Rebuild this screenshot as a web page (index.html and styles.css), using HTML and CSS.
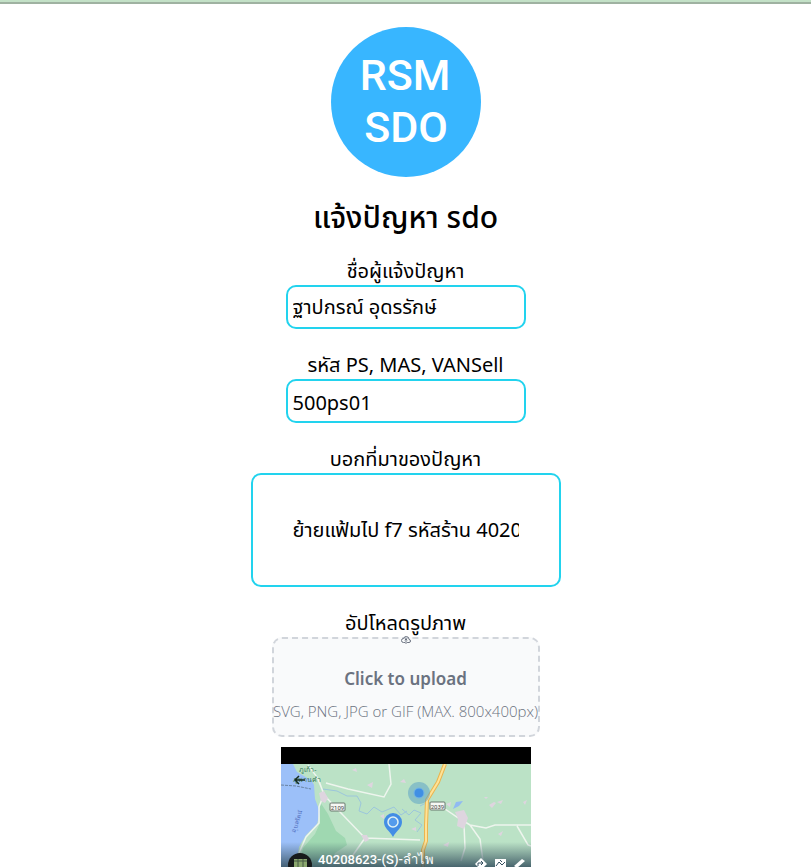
FILE: index.html
```html
<!DOCTYPE html>
<html lang="th">
<head>
<meta charset="utf-8">
<meta name="viewport" content="width=device-width, initial-scale=1">
<title>แจ้งปัญหา sdo</title>
<link rel="stylesheet" href="styles.css">
</head>
<body>
<div class="topbar"></div>
<main class="page">
  <svg class="logo" viewBox="0 0 150 150" role="img" aria-label="RSM SDO">
    <circle cx="75" cy="75" r="75" fill="#38b6ff"/>
    <text x="74" y="63" class="logo-text">RSM</text>
    <text x="75" y="115" class="logo-text">SDO</text>
  </svg>
  <h1 class="title">แจ้งปัญหา sdo</h1>
  <form class="form">
    <div class="field">
      <label for="name">ชื่อผู้แจ้งปัญหา</label>
      <input class="input" id="name" type="text" value="ฐาปกรณ์ อุดรรักษ์">
    </div>
    <div class="field">
      <label for="code">รหัส PS, MAS, VANSell</label>
      <input class="input" id="code" type="text" value="500ps01">
    </div>
    <div class="field">
      <label for="detail">บอกที่มาของปัญหา</label>
      <input class="input input-large" id="detail" type="text" value="ย้ายแฟ้มไป f7 รหัสร้าน 40208623">
    </div>
    <div class="field">
      <label for="file">อัปโหลดรูปภาพ</label>
      <label class="upload" for="file">
        <svg class="upload-icon" viewBox="0 0 20 16" fill="none" stroke="#6b7280" stroke-width="2" stroke-linecap="round" stroke-linejoin="round" aria-hidden="true"><path d="M13 13h3a3 3 0 0 0 0-6h-.025A5.56 5.56 0 0 0 16 6.500 5.500 5.500 0 0 0 5.207 5.021C5.137 5.017 5.071 5 5 5a4 4 0 0 0 0 8h2.167M10 15V6m0 0L8 8m2-2 2 2"/></svg>
        <span class="upload-main">Click to upload</span>
        <span class="upload-hint">SVG, PNG, JPG or GIF (MAX. 800x400px)</span>
      </label>
      <input class="file" id="file" type="file">
    </div>
  </form>
  <svg class="photo" viewBox="0 0 250 120" role="img" aria-label="แผนที่">
    <defs>
      <linearGradient id="shade" x1="0" y1="0" x2="0" y2="1"><stop offset="0" stop-color="#344f5e" stop-opacity="0"/><stop offset="1" stop-color="#344f5e" stop-opacity=".85"/></linearGradient>
    </defs>
    <rect width="250" height="120" fill="#bbe2c6"/>
    <path d="M0 17H17L24 22 29 30 33 38 34 52 39 65 36 77 25 88 18 100 15 120H0Z" fill="#9cc0f9"/>
    <path d="M12 17H30L35 27 28 32 16 25Z" fill="#bbe2c6"/>
    <path d="M39 55 47 67 55 84 64 91 66 98 54 106 47 120H18L22 101 34 87 39 76Z" fill="#9fd8b1"/>
    <path d="M0 38 15 39 30 42" fill="none" stroke="#6983a3" stroke-dasharray="3 1"/>
    <g fill="none" stroke="#9cc6dc" stroke-width="1">
      <path d="M42 42 56 44 66 49 76 49 80 56 78 64 86 67 93 60 101 65 113 60 120 68 126 64"/>
      <path d="M121 62 128 68 133 63 140 66 134 73 141 78 136 85M139 59l8-4 6 3"/>
    </g>
    <g fill="none" stroke="#eef5ee" stroke-width="1.500">
      <path d="M27 18 36 30 43 47 38 60 38 76 25 90 18 106M43 48 60 66 84 91 72 108M43 48 37 31M45 36 67 42 103 50 110 37 108 17M84 91 139 93M164 62l12 8 13 8 16 3 9-3h36M183 77l1 24-4 13M189 78l10 14 3 22M236 79l11 19 3 1"/>
    </g>
    <path d="M164 17 157 35 146 53 145 78 145 94 142 103 142 120" fill="none" stroke="#e9b550" stroke-width="4"/>
    <path d="M164 17 157 35 146 53 145 78 145 94 142 103 142 120" fill="none" stroke="#ffe297" stroke-width="2"/>
    <path d="m38 46 5-2 4 7-3 5-4-2Zm42 42 6 0 2 5-4 2ZM71 23l4-2 1 4Zm15 15 6-3-1 6ZM99 69l4-2v5Zm66-12 5-2-1 5Zm9 8 9-2 4 8-4 11-7-3 1-7Zm34-7 5-3 2 1-4 5Zm8-3 6-2-2 4Zm26 0 4-2-2 5Zm-39-5 4 0-2 2Zm14 37 5-3-2 5Zm-87-5 5-2v4ZM162 98l6-3-1 5ZM119 35l4-3 2 4Z" fill="#ded5df"/>
    <path d="m172 62 3-7 7-1-4 5Z" fill="#90baf2"/>
    <rect width="250" height="17" fill="#000"/>
    <g class="place"><text x="27" y="25">ภูเก้า-</text><text x="26" y="35">ภูพานคำ</text></g>
    <text class="water" x="18" y="75" transform="rotate(-72 18 75)">อุบลรัตน์</text>
    <path d="M24 33H14m4-4-4 4 4 4" fill="none" stroke="#172d20" stroke-width="1.500"/>
    <g fill="#f6f8f4" stroke="#69766c"><rect x="49" y="56" width="15" height="8" rx="1"/><rect x="149" y="55" width="15" height="8" rx="1"/></g>
    <g class="road-number"><text x="56.500" y="63">2109</text><text x="156.500" y="62">2039</text></g>
    <circle cx="138" cy="46" r="11" fill="#559dc6" opacity=".5"/>
    <circle cx="138" cy="46" r="5" fill="#408fe4" stroke="#72b5e6"/>
    <path d="M112 90C108 83 103 81 103 75a9 9 0 0 1 18 0c0 6-5 8-9 15Z" fill="#438de5"/>
    <circle cx="112" cy="75" r="5" fill="#559bec" stroke="#e1f1f4" stroke-width="1.500"/>
    <rect y="95" width="250" height="25" fill="url(#shade)"/>
    <circle cx="19" cy="118" r="12" fill="#171a1b"/>
    <path d="M13 112h13v8H13Z" fill="#8ba76e"/><path d="M13 114h13M17 112v8M22 112v8" stroke="#445842"/>
    <text class="place-title" x="37" y="117">40208623-(S)-ลำไพ</text>
    <g fill="#fff"><path d="m200 111 6 6-6 6-6-6Z"/><path d="M214 112h11v9h-11Z"/><path d="m233 119 8-7 3 2-8 7Z"/></g>
    <path d="M197 119v-3h5m-2-2 2 2-2 2M215 119l3-4 3 3 3-3M219 113l2 2" fill="none" stroke="#344f5e"/>
  </svg>
</main>
</body>
</html>
```
FILE: styles.css
```css
* { box-sizing: border-box; }
body {
  margin: 0;
  background: #fff;
  color: #000;
  font-family: "Segoe UI", "Noto Sans", "Noto Sans Thai", sans-serif;
  font-size: 20px;
  line-height: 28px;
}
.topbar { height: 4px; background: #c3e1c7; border-bottom: 2px solid #9fb2a1; }
.page { display: flex; flex-direction: column; align-items: center; padding-top: 23px; }
.logo { display: block; width: 150px; height: 150px; }
.logo-text { fill: #fff; font: 500 43px Roboto, sans-serif; text-anchor: middle; }
.title { margin: 22px 0; font-size: 30px; line-height: 36px; font-weight: 500; }
.form { display: flex; flex-direction: column; gap: 22px; }
.field { display: flex; flex-direction: column; align-items: center; position: relative; }
.input {
  width: 240px;
  height: 44px;
  padding: 2px 5px 0;
  border: 2px solid #22d3ee;
  border-radius: 10px;
  background: #fff;
  color: #000;
  font: inherit;
}
.input-large { width: 310px; height: 114px; padding: 42px 40px 40px; }
.upload {
  display: flex;
  flex-direction: column;
  align-items: center;
  width: 268px;
  height: 100px;
  border: 2px dashed #d1d5db;
  border-radius: 10px;
  background: #f9fafb;
  color: #6b7280;
  cursor: pointer;
}
.upload-icon { flex: none; width: 10px; height: 8px; margin-top: -3px; }
.upload-main { margin-top: 21px; font-size: 17px; font-weight: 600; }
.upload-hint { margin-top: 4px; font-family: "Segoe UI", "Open Sans", sans-serif; font-size: 15px; font-weight: 300; white-space: nowrap; }
.file { position: absolute; width: 1px; height: 1px; bottom: 0; opacity: 0; }
.photo { display: block; width: 250px; height: 120px; margin-top: 10px; }
.place { fill: #387957; font: 7px "Noto Sans", sans-serif; text-anchor: middle; }
.water { fill: #526fc0; font: 6px "Noto Sans", sans-serif; text-anchor: middle; }
.road-number { fill: #444; font: 6px Roboto, sans-serif; text-anchor: middle; }
.place-title { fill: #fff; font: 500 13px Roboto, "Noto Sans", sans-serif; }
```
